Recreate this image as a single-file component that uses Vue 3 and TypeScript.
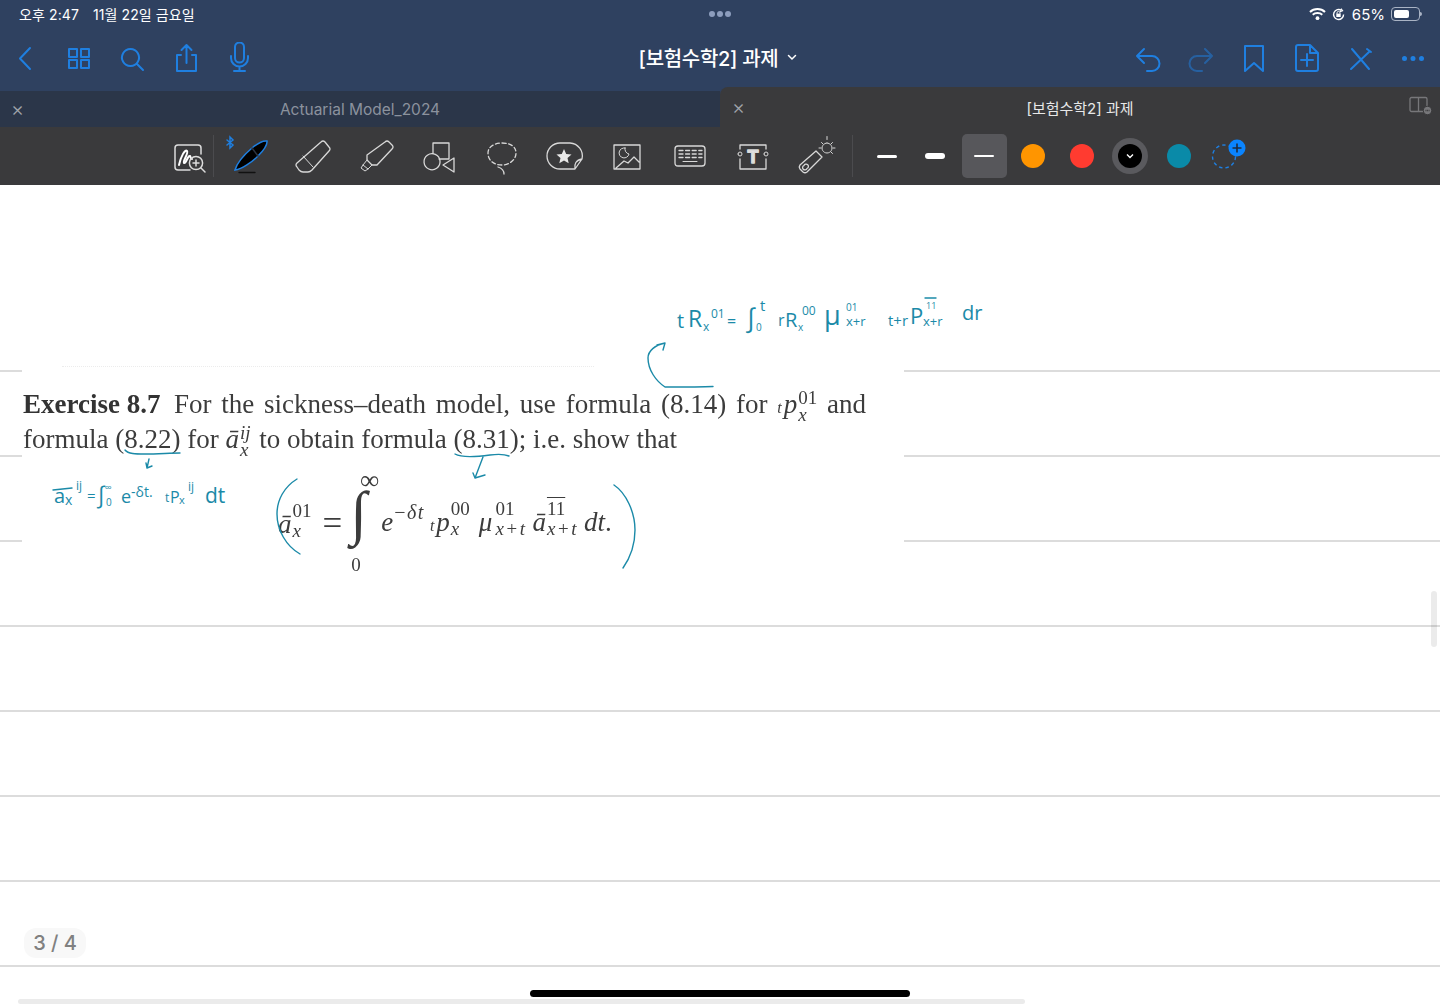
<template>
  <div class="app">
    <header class="chrome">
      <div class="statusbar">
        <div class="status-left"><span>오후 2:47</span><span>11월 22일 금요일</span></div>
        <div class="multitask"><i></i><i></i><i></i></div>
        <div class="status-right">
          <svg width="17" height="14" viewBox="0 0 17 14" fill="none" stroke="#fff" stroke-width="2" stroke-linecap="butt">
            <path d="M1 5 C5 1 12 1 16 5" />
            <path d="M3.7 7.8 C6.3 5.5 10.7 5.5 13.3 7.8" />
            <circle cx="8.5" cy="11.2" r="1.9" fill="#fff" stroke="none" />
          </svg>
          <svg class="lock" width="13" height="13" viewBox="0 0 13 13" fill="none" stroke="#fff" stroke-width="1.4">
            <path d="M11.6 6.5 A5 5 0 1 1 9.5 2.4" />
            <path d="M9 0.6 L10.6 2.8 L8 3.6" stroke-width="1.1" />
            <rect x="4.3" y="5.6" width="4.4" height="3.4" fill="#fff" stroke="none" />
            <path d="M5 5.8 V4.9 A1.5 1.5 0 0 1 8 4.9 V5.8" stroke-width="0.9" />
          </svg>
          <span class="percent">65%</span>
          <span class="battery"><i></i></span>
        </div>
      </div>

      <div class="navbar">
        <div class="nav-group">
          <svg v-for="icon in navLeft" :key="icon.name" class="nav-icon" width="30" height="32" viewBox="0 0 30 32" fill="none" stroke="#1f7fe0" stroke-width="2" stroke-linecap="round" stroke-linejoin="round">
            <path :d="icon.d" />
          </svg>
        </div>
        <div class="doc-title">
          <span>[보험수학2] 과제</span>
          <svg width="10" height="7" viewBox="0 0 10 7" fill="none" stroke="#fff" stroke-width="1.5" stroke-linecap="round"><path d="M1.5 1.5 L5 5 L8.5 1.5" /></svg>
        </div>
        <div class="nav-group nav-right">
          <svg v-for="icon in navRight" :key="icon.name" class="nav-icon" :class="{ dim: icon.dim }" width="30" height="32" viewBox="0 0 30 32" fill="none" stroke="#1f7fe0" :stroke-width="icon.weight ?? 2" stroke-linecap="round" stroke-linejoin="round">
            <path :d="icon.d" />
          </svg>
        </div>
      </div>

      <div class="tabs">
        <div class="tab tab-off">
          <span class="tab-x">×</span>
          <span class="tab-name">Actuarial Model_2024</span>
        </div>
        <div class="tab tab-on">
          <span class="tab-x">×</span>
          <span class="tab-name">[보험수학2] 과제</span>
          <svg class="split" width="24" height="20" viewBox="0 0 24 20" fill="none" stroke="#77777a" stroke-width="1.3">
            <rect x="1" y="1.5" width="17" height="14" rx="1.5" />
            <path d="M9.5 1.5 V15.5" />
            <circle cx="18.5" cy="14.5" r="4.2" fill="#77777a" stroke="#3a3a3c" stroke-width="1" />
            <path d="M16.5 14.5 H20.5" stroke="#3a3a3c" stroke-dasharray="1 .6" />
          </svg>
        </div>
      </div>

      <div class="toolbar">
        <div class="tool-slot first">
          <svg class="tool" width="44" height="44" viewBox="0 0 44 44" fill="none" stroke="#dcdcdc" stroke-width="1.5" stroke-linecap="round">
            <path d="M23 36 H11 Q8 36 8 33 V14 Q8 11 11 11 H31 Q34 11 34 14 V20" />
            <path d="M12 31 C14 22 18 15 20 17 C22 19 15 28 17 29 C19 30 21 21 23 22 C24 23 23 25 25 25" stroke="#fff" stroke-width="2" />
            <circle cx="29" cy="29" r="6.6" />
            <path d="M34 34 L38 38 M29 26 V32 M26 29 H32" />
          </svg>
        </div>
        <span class="tool-sep"></span>
        <div class="tool-row">
          <div class="tool-slot">
            <svg class="tool" width="44" height="44" viewBox="0 0 44 44" fill="none" stroke-linecap="round">
              <path d="M7 36 C9 29 17 20 24 14 C30 9 36 6.500 39 7 C39.500 11 35 17 30 22 C24 28 14 35 7 36 Z" fill="#000" stroke="#1f7fe0" stroke-width="1.5" />
              <path d="M24 14 L30 22" stroke="#2d3440" stroke-width="1.5" />
              <path d="M11 38.500 H27" stroke="#111" stroke-width="1.4" />
              <path d="M-1 6 L5 11 L2 14 V3 L5 6 L-1 11" stroke="#1f7fe0" stroke-width="1.5" />
            </svg>
          </div>
          <div v-for="tool in tools" :key="tool.name" class="tool-slot">
            <svg class="tool" width="44" height="44" viewBox="0 0 44 44" fill="none" stroke="#d8d8d8" stroke-width="1.3" stroke-linecap="round" stroke-linejoin="round">
              <path :d="tool.d" />
              <path v-if="tool.fine" :d="tool.fine" stroke-width="1" />
              <path v-if="tool.dashed" :d="tool.dashed" stroke-dasharray="4 2.600" />
              <path v-if="tool.solid" :d="tool.solid" fill="#e8e8e8" stroke="none" />
              <text v-if="tool.name === 'textbox'" x="22" y="28.500" text-anchor="middle" class="tool-t">T</text>
            </svg>
          </div>
        </div>
        <span class="tool-sep wide"></span>
        <div class="pen-row">
          <div class="pen-slot"><span class="stroke thin"></span></div>
          <div class="pen-slot"><span class="stroke thick"></span></div>
          <div class="pen-slot"><span class="selected"><span class="stroke hair"></span></span></div>
          <div v-for="color in colors" :key="color.value" class="pen-slot">
            <span class="swatch" :class="{ active: color.active }" :style="{ background: color.value }">
              <svg v-if="color.active" width="8" height="6" viewBox="0 0 8 6" fill="none" stroke="#fff" stroke-width="1.4"><path d="M1 1.500 L4 4.500 L7 1.500" /></svg>
            </span>
          </div>
          <div class="pen-slot">
            <svg class="add-color" width="44" height="44" viewBox="0 0 44 44" fill="none">
              <circle cx="18" cy="22.500" r="11.500" stroke="#1f7fe0" stroke-width="1.4" stroke-dasharray="3.500 3" />
              <circle cx="31" cy="14" r="8.500" fill="#0a84ff" />
              <path d="M31 9.500 V18.500 M26.500 14 H35.500" stroke="#1c2b40" stroke-width="1.600" />
            </svg>
          </div>
        </div>
      </div>
    </header>

    <main class="sheet">
      <section class="exercise">
        <div class="scrap-edge"></div>
        <p class="line line-first">
          <b>Exercise 8.7</b>&ensp;For the sickness–death model, use formula (8.14) for
          <span class="nowrap"><i class="pre">t</i><i>p</i><span class="scripts"><span>01</span><i>x</i></span></span> and
        </p>
        <p class="line">
          formula (8.22) for <i>ā</i><span class="scripts wide-gap"><i>ij</i><i>x</i></span> to obtain formula (8.31); i.e. show that
        </p>
        <div class="formula">
          <span class="math"><i>ā</i><span class="scripts"><span>01</span><i>x</i></span></span>
          <span class="math equals">=</span>
          <span class="integral">
            <span class="limit upper">∞</span>
            <span class="sign">∫</span>
            <span class="limit lower">0</span>
          </span>
          <span class="math">
            <i>e</i><span class="power">−<i>δt</i></span><i class="pre">t</i><i>p</i><span class="scripts"><span>00</span><i>x</i></span><i class="mu">μ</i><span class="scripts after-mu"><span>01</span><i>x+t</i></span><i class="abar">ā</i><span class="scripts"><span class="over">11</span><i>x+t</i></span><i class="dt">dt</i>.
          </span>
        </div>
      </section>

      <svg class="ink" width="1440" height="821" viewBox="0 185 1440 821" fill="none">
        <g stroke="#1b8aa8" stroke-width="1.400" stroke-linecap="round" stroke-linejoin="round">
          <path v-for="(d, i) in inkStrokes" :key="i" :d="d" />
        </g>
        <g class="ink-text">
          <text v-for="(t, i) in inkTexts" :key="i" :x="t.x" :y="t.y" :font-size="t.size">{{ t.text }}</text>
        </g>
      </svg>

      <div class="page-pill">3 / 4</div>
      <span class="scroll-v"></span>
      <span class="scroll-h"></span>
      <span class="home-bar"></span>
    </main>
  </div>
</template>

<script setup lang="ts">
interface Icon {
  name: string
  d: string
  dim?: boolean
  weight?: number
}

interface Tool {
  name: string
  d: string
  fine?: string
  dashed?: string
  solid?: string
}

const navLeft: Icon[] = [
  { name: 'back', d: 'M20 6 L10 16.500 L20 27' },
  { name: 'grid', d: 'M5 7 H13 V15 H5 Z M17 7 H25 V15 H17 Z M5 18 H13 V26 H5 Z M17 18 H25 V26 H17 Z' },
  { name: 'search', d: 'M13.500 7 A8.500 8.500 0 1 1 13.490 7 Z M20 22 L26 28' },
  { name: 'share', d: 'M10 13 H6 V29 H25 V13 H21 M15.500 21 V3 M10.500 8 L15.500 3 L20.500 8' },
  { name: 'mic', d: 'M11 5 A4.500 4.500 0 0 1 20 5 V16 A4.500 4.500 0 0 1 11 16 Z M7 14 V16 A8.500 8.500 0 0 0 24 16 V14 M15.500 25 V29 M10 29 H21' }
]

const navRight: Icon[] = [
  { name: 'undo', d: 'M11 7 L4 14 L11 21 M4 14 H19 A7.500 7.500 0 0 1 19 29 H14' },
  { name: 'redo', d: 'M19 7 L26 14 L19 21 M26 14 H11 A7.500 7.500 0 0 0 11 29 H16', dim: true },
  { name: 'bookmark', d: 'M6 4 H24 V29 L15 21 L6 29 Z' },
  { name: 'add-page', d: 'M6 3 H18 L26 11 V27 Q26 29 24 29 H6 Q4 29 4 27 V5 Q4 3 6 3 Z M18 3 V11 H26 M15 12 V24 M9 18 H21' },
  { name: 'tools', d: 'M7 7 L24 27 M24 10 L6 27 M22 7 L26 10' },
  { name: 'more', d: 'M6.500 16.500 h.01 M15 16.500 h.01 M23.500 16.500 h.01', weight: 5 }
]

const tools: Tool[] = [
  {
    name: 'eraser',
    d: 'M30 8 Q32 6 34 8 L38 13 Q40 15 38 17 L21 36 Q19 38 17 38 H12 Q10 38 8 36 L6 33 Q4 31 6 29 Z',
    fine: 'M12 22 L22 33'
  },
  {
    name: 'highlighter',
    d: 'M31 8 Q33 6 35 8 L38 11 Q40 13 38 15 L23 31 H18 L13 26 V21 Z',
    fine: 'M13 26 L9 31 L7 34 L11 37 L14 35 L18 31 M9 31 L14 35'
  },
  {
    name: 'shapes',
    d: 'M16 9 H32 V25 H22 M16 19 V9 M37 24 V38 L26 31 Z M23 27 A8 8 0 1 1 22.990 26.900'
  },
  {
    name: 'lasso',
    d: 'M18 33 C21 34 24 36 24 40',
    dashed: 'M22 9 C31 9 36 13 36 19 C36 26 29 31 22 31 C13 31 8 26 8 19 C8 13 14 9 22 9 Z'
  },
  {
    name: 'stamp',
    d: 'M18 9 H28 A13 13 0 0 1 40 25 L33 35 H18 A13 13 0 0 1 18 9 Z M33 35 C32 30 34 26 40 25',
    solid: 'M22 15 L24.200 20 L29.500 20.500 L25.500 24 L26.700 29.200 L22 26.400 L17.300 29.200 L18.500 24 L14.500 20.500 L19.800 20 Z'
  },
  {
    name: 'picture',
    d: 'M9 11 H35 V35 H9 Z M11 34 L19 27 L23 29 L29 23 L34 28',
    fine: 'M20 14 A5 5 0 1 0 24 20 A5 5 0 0 1 20 14 Z'
  },
  {
    name: 'keyboard',
    d: 'M10 12 H34 Q37 12 37 15 V29 Q37 32 34 32 H10 Q7 32 7 29 V15 Q7 12 10 12 Z',
    dashed: 'M11 16.500 H34 M11 20 H34 M11 23.500 H34',
    fine: 'M15 27.500 H29'
  },
  {
    name: 'textbox',
    d: 'M9 15 V11 H35 V15 M9 25 V35 H35 V25',
    fine: 'M9 20 m-2 0 a2 2 0 1 0 4 0 a2 2 0 1 0 -4 0 M35 20 m-2 0 a2 2 0 1 0 4 0 a2 2 0 1 0 -4 0'
  },
  {
    name: 'laser',
    d: 'M22 17 L28 23 L13 38 Q11 39.500 9 38 L6 35 Q4.500 33 6 31 Z M10 31.500 a2.300 2.300 0 1 0 3 3 a2.300 2.300 0 1 0 -3 -3',
    fine: 'M33 9 a5 5 0 1 0 .01 0 M33 2.500 V5.500 M41 14 H39 M25 14 H27 M38.500 8.500 L37 10 M27.500 8.500 L29 10 M38.500 19.500 L37 18'
  }
]

const colors = [
  { value: '#ff9500' },
  { value: '#ff3b30' },
  { value: '#000000', active: true },
  { value: '#0a8aa8' }
]

// 손글씨 곡선과 화살표 (화면 좌표)
const inkStrokes: string[] = [
  'M713 386.500 C700 387 680 387 665 387 C656 381 648 370 648 358 C648 351 655 345 665 343 M657 345 L665 343 L663 350',
  'M125 450 C128 454 136 454 145 454 C158 454 170 453 180 453 M149 459 L147 468 M146 463 L147 468 L152 466',
  'M455 454 C462 458 475 457 490 455 C498 454 504 454 509 456 M483 457 L475 478 M473 473 L475 478 L485 475',
  'M297 479 C284 487 277 500 277 514 C277 530 286 546 300 554',
  'M614 485 C626 493 635 512 635 530 C635 545 630 558 623 568',
  'M53 490 L72 488',
  'M925 298 H936'
]

const inkTexts = [
  { x: 677, y: 328, size: 20, text: 't' },
  { x: 688, y: 327, size: 23, text: 'R' },
  { x: 703, y: 331, size: 12, text: 'x' },
  { x: 711, y: 318, size: 12, text: '01' },
  { x: 727, y: 327, size: 16, text: '=' },
  { x: 746, y: 327, size: 26, text: '∫' },
  { x: 760, y: 311, size: 15, text: 't' },
  { x: 756, y: 331, size: 10, text: '0' },
  { x: 778, y: 326, size: 16, text: 'r' },
  { x: 785, y: 327, size: 20, text: 'R' },
  { x: 798, y: 331, size: 10, text: 'x' },
  { x: 802, y: 315, size: 12, text: '00' },
  { x: 824, y: 325, size: 27, text: 'μ' },
  { x: 846, y: 311, size: 10, text: '01' },
  { x: 846, y: 326, size: 13, text: 'x+r' },
  { x: 888, y: 326, size: 15, text: 't+r' },
  { x: 910, y: 324, size: 22, text: 'P' },
  { x: 923, y: 326, size: 13, text: 'x+r' },
  { x: 926, y: 309, size: 9, text: '11' },
  { x: 962, y: 320, size: 20, text: 'dr' },
  { x: 54, y: 503, size: 20, text: 'a' },
  { x: 65, y: 505, size: 14, text: 'x' },
  { x: 76, y: 490, size: 12, text: 'ij' },
  { x: 87, y: 501, size: 15, text: '=' },
  { x: 97, y: 503, size: 23, text: '∫' },
  { x: 105, y: 491, size: 10, text: '∞' },
  { x: 106, y: 506, size: 10, text: '0' },
  { x: 121, y: 503, size: 18, text: 'e' },
  { x: 131, y: 497, size: 14, text: '-δt.' },
  { x: 165, y: 502, size: 12, text: 't' },
  { x: 170, y: 503, size: 16, text: 'P' },
  { x: 179, y: 504, size: 11, text: 'x' },
  { x: 188, y: 491, size: 12, text: 'ij' },
  { x: 205, y: 503, size: 21, text: 'dt' }
]
</script>

<style>
html,
body {
  margin: 0;
  background: #fff;
}
</style>

<style scoped>
.app {
  display: flex;
  flex-direction: column;
  width: 1440px;
  height: 1006px;
  overflow: hidden;
  font-family: Inter, "Noto Sans CJK KR", sans-serif;
}

/* ===== 상단 크롬 ===== */
.chrome {
  background: #2f4160;
  color: #fff;
}
.statusbar {
  display: grid;
  grid-template-columns: 1fr auto 1fr;
  align-items: center;
  height: 28px;
  padding: 0 20px 0 19px;
  font-size: 14px;
}
.status-left {
  display: flex;
  gap: 14px;
  letter-spacing: 0.1px;
}
.multitask {
  display: flex;
  gap: 2px;
}
.multitask i {
  width: 6px;
  height: 6px;
  border-radius: 50%;
  background: #8d9dbd;
}
.status-right {
  display: flex;
  justify-content: flex-end;
  align-items: center;
}
.lock {
  margin-left: 6px;
}
.percent {
  margin-left: 7px;
  font-size: 15px;
}
.battery {
  position: relative;
  display: block;
  box-sizing: border-box;
  width: 29px;
  height: 14px;
  margin-left: 6px;
  padding: 2px;
  border: 1px solid #a9b3c4;
  border-radius: 4px;
}
.battery::after {
  content: "";
  position: absolute;
  right: -3px;
  top: 4px;
  width: 2px;
  height: 4px;
  border-radius: 0 2px 2px 0;
  background: #a9b3c4;
}
.battery i {
  display: block;
  width: 65%;
  height: 100%;
  border-radius: 2px;
  background: #fff;
}

.navbar {
  display: grid;
  grid-template-columns: 1fr auto 1fr;
  align-items: center;
  height: 59px;
  padding: 0 12px 0 10px;
}
.nav-group {
  display: flex;
  gap: 23.500px;
}
.nav-right {
  justify-content: flex-end;
  gap: 23px;
}
.nav-icon.dim {
  opacity: 0.5;
}
.doc-title {
  display: flex;
  align-items: center;
  gap: 9px;
  margin-left: -2px;
  font-size: 20px;
  font-weight: 500;
  letter-spacing: -0.3px;
}

.tabs {
  display: grid;
  grid-template-columns: 720px 720px;
  align-items: end;
  height: 40px;
}
.tab {
  position: relative;
  display: flex;
  align-items: center;
  justify-content: center;
}
.tab-off {
  height: 36px;
  background: #2b3649;
  color: #8b929e;
  font-size: 15.500px;
}
.tab-on {
  height: 40px;
  border-top-left-radius: 8px;
  background: #3a3a3c;
  color: #e8e8e8;
  font-size: 15px;
}
.tab-x {
  position: absolute;
  left: 11px;
  font-size: 20px;
  font-weight: 300;
  line-height: 1;
  color: #a0a4aa;
}
.tab-on .tab-x {
  left: 12px;
}
.split {
  position: absolute;
  right: 7px;
  top: 9px;
}

.toolbar {
  display: flex;
  align-items: center;
  height: 58px;
  padding-left: 167px;
  background: #3a3a3c;
}
.tool-slot {
  display: flex;
  align-items: center;
  justify-content: center;
  width: 44px;
  height: 44px;
}
.tool {
  overflow: visible;
}
.tool-t {
  fill: #e4e4e4;
  font: 700 18px Inter, sans-serif;
}
.tool-sep {
  width: 1px;
  height: 42px;
  margin-left: 2px;
  background: #4b4b4e;
}
.tool-sep.wide {
  margin-left: -5px;
}
.tool-row {
  display: grid;
  grid-template-columns: repeat(10, 62.900px);
  margin-left: 14px;
}
.pen-row {
  display: grid;
  grid-template-columns: repeat(8, 48.700px);
  margin-left: 9.500px;
}
.pen-slot {
  display: flex;
  align-items: center;
  justify-content: center;
  height: 44px;
}
.stroke {
  display: block;
  width: 20px;
  border-radius: 3px;
  background: #fff;
}
.stroke.thin {
  height: 3px;
}
.stroke.thick {
  height: 6px;
}
.stroke.hair {
  height: 1.500px;
}
.selected {
  display: flex;
  align-items: center;
  justify-content: center;
  width: 45px;
  height: 44px;
  border-radius: 5px;
  background: #57575b;
}
.swatch {
  display: flex;
  align-items: center;
  justify-content: center;
  width: 24px;
  height: 24px;
  border-radius: 50%;
}
.swatch.active {
  box-shadow: 0 0 0 6px #5a5a5e;
}

/* ===== 노트 화면 ===== */
.sheet {
  position: relative;
  flex: 1;
  box-sizing: border-box;
  padding-top: 185px;
  background-image: linear-gradient(#dcdcdc 0 2px, transparent 2px);
  background-size: 100% 85px;
  background-origin: content-box;
  background-clip: content-box;
}
.exercise {
  position: absolute;
  left: 22px;
  top: 180px;
  box-sizing: border-box;
  width: 882px;
  height: 225px;
  padding: 22px 38px 0 1px;
  background: #fff;
  color: #3c3c3c;
  font-family: "Liberation Serif", "Times New Roman", serif;
  font-size: 27px;
}
.scrap-edge {
  position: absolute;
  left: 40px;
  right: 310px;
  top: 1px;
  border-top: 1px dotted #ececec;
}
.line {
  height: 35px;
  margin: 0;
  line-height: 35px;
  white-space: nowrap;
  filter: blur(0.3px);
}
.line-first {
  text-align: justify;
  text-align-last: justify;
  white-space: normal;
}
.line b {
  display: inline-block;
  color: #333;
}
.pre {
  margin-right: 2px;
  font-size: 16px;
}
.nowrap {
  white-space: nowrap;
}
.scripts {
  display: inline-flex;
  flex-direction: column;
  margin-block: -12px;
  margin-left: 1px;
  vertical-align: 9px;
  font-size: 19px;
  line-height: 17px;
  text-align: left;
  text-align-last: left;
}
.scripts.wide-gap {
  margin-right: 2px;
}
.scripts i,
.scripts span {
  display: block;
  white-space: nowrap;
}
.formula {
  display: flex;
  align-items: center;
  height: 108px;
  margin-top: 13px;
  padding-left: 255px;
  font-size: 27px;
  line-height: 36px;
  filter: blur(0.3px);
}
.formula .scripts {
  margin-block: -16px;
  vertical-align: 16px;
  line-height: 20px;
}
.formula .scripts i {
  letter-spacing: 1.500px;
}
.formula .scripts.after-mu {
  margin-left: 3px;
}
.math {
  white-space: nowrap;
}
.equals {
  margin-left: 11px;
  font-size: 35px;
}
.integral {
  display: flex;
  flex-direction: column;
  width: 39px;
  height: 108px;
  font-size: 19px;
  line-height: 20px;
}
.limit.upper {
  align-self: flex-end;
  margin-right: 2px;
  font-size: 27px;
}
.limit.lower {
  margin-top: auto;
  margin-bottom: 3px;
  margin-left: 9px;
}
.sign {
  height: 60px;
  margin-left: 8px;
  font-size: 60px;
  line-height: 46px;
}
.power {
  margin-left: 1px;
  margin-right: 5px;
  font-size: 20px;
  letter-spacing: 1.500px;
  vertical-align: 12px;
  line-height: 0;
}
.mu {
  margin-left: 9px;
}
.abar {
  margin-left: 6px;
}
.dt {
  margin-left: 6px;
}
.over {
  text-decoration: overline;
}
.ink {
  position: absolute;
  left: 0;
  top: 0;
  pointer-events: none;
}
.ink-text {
  fill: #1b8aa8;
  font-family: "Open Sans", sans-serif;
  font-style: normal;
  font-weight: 400;
}

.page-pill {
  position: absolute;
  left: 24px;
  top: 743px;
  width: 62px;
  height: 30px;
  border-radius: 12px;
  background: #f8f8f8;
  color: #808080;
  font-size: 20px;
  font-weight: 500;
  line-height: 30px;
  text-align: center;
}
.scroll-v {
  position: absolute;
  left: 1431px;
  top: 406px;
  width: 6px;
  height: 56px;
  border-radius: 3px;
  background: rgba(0, 0, 0, 0.08);
}
.scroll-h {
  position: absolute;
  left: 18px;
  top: 814px;
  width: 1007px;
  height: 5px;
  border-radius: 3px;
  background: #ebebeb;
}
.home-bar {
  position: absolute;
  left: 530px;
  top: 805px;
  width: 380px;
  height: 7px;
  border-radius: 4px;
  background: #000;
}
</style>
